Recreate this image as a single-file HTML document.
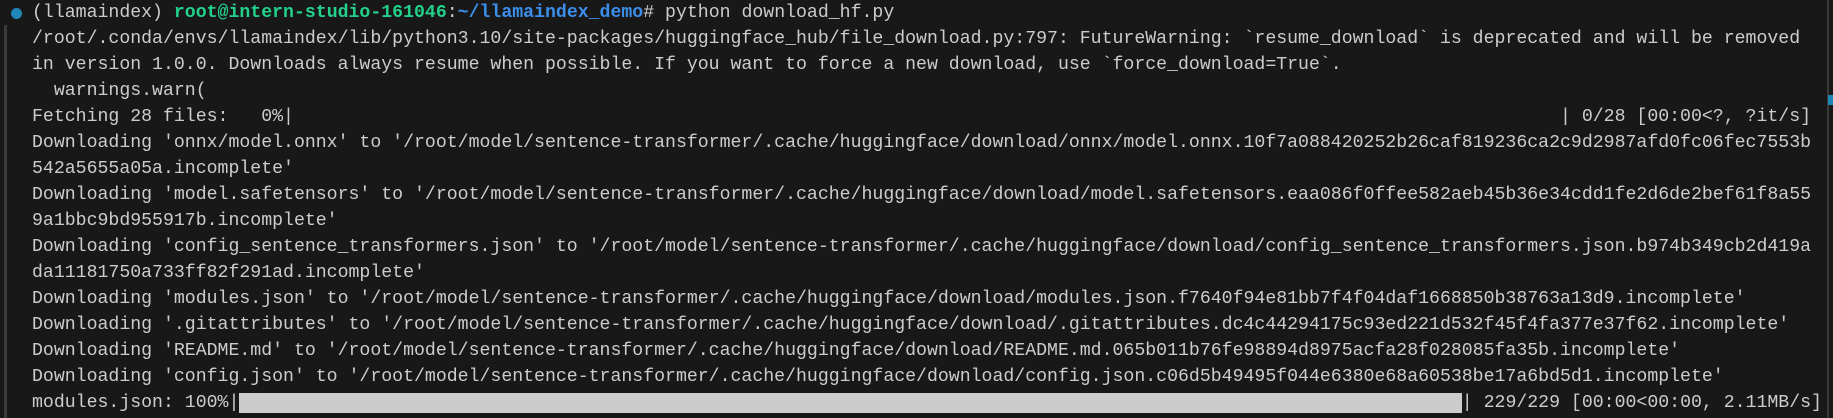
<!DOCTYPE html>
<html><head><meta charset="utf-8"><style>
html,body{margin:0;padding:0;background:#181818;width:1833px;height:418px;overflow:hidden}
.t{position:absolute;left:32px;top:0;font-family:"Liberation Mono",monospace;font-size:18.2px;color:#cccccc}
.l{height:26px;line-height:26px;white-space:pre}
.g{color:#23d18b;font-weight:bold}.b{color:#3b8eea;font-weight:bold}
.bar{background:#cccccc}
</style></head><body>
<div style="position:absolute;left:11px;top:8px;width:11px;height:11px;border-radius:50%;background:#1e87b8"></div>
<div style="position:absolute;left:4px;top:25px;width:3px;height:393px;background:#3a3a3a"></div>
<div style="position:absolute;left:1827px;top:0;width:2px;height:418px;background:#3a3a3a"></div>
<div style="position:absolute;left:1828px;top:95px;width:5px;height:10px;background:#1e87b8"></div>
<div class="t">
<div class="l">(llamaindex) <span class="g">root@intern-studio-161046</span>:<span class="b">~/llamaindex_demo</span># python download_hf.py</div>
<div class="l">/root/.conda/envs/llamaindex/lib/python3.10/site-packages/huggingface_hub/file_download.py:797: FutureWarning: `resume_download` is deprecated and will be removed</div>
<div class="l">in version 1.0.0. Downloads always resume when possible. If you want to force a new download, use `force_download=True`.</div>
<div class="l">  warnings.warn(</div>
<div class="l">Fetching 28 files:   0%|                                                                                                                    | 0/28 [00:00&lt;?, ?it/s]</div>
<div class="l">Downloading 'onnx/model.onnx' to '/root/model/sentence-transformer/.cache/huggingface/download/onnx/model.onnx.10f7a088420252b26caf819236ca2c9d2987afd0fc06fec7553b</div>
<div class="l">542a5655a05a.incomplete'</div>
<div class="l">Downloading 'model.safetensors' to '/root/model/sentence-transformer/.cache/huggingface/download/model.safetensors.eaa086f0ffee582aeb45b36e34cdd1fe2d6de2bef61f8a55</div>
<div class="l">9a1bbc9bd955917b.incomplete'</div>
<div class="l">Downloading 'config_sentence_transformers.json' to '/root/model/sentence-transformer/.cache/huggingface/download/config_sentence_transformers.json.b974b349cb2d419a</div>
<div class="l">da11181750a733ff82f291ad.incomplete'</div>
<div class="l">Downloading 'modules.json' to '/root/model/sentence-transformer/.cache/huggingface/download/modules.json.f7640f94e81bb7f4f04daf1668850b38763a13d9.incomplete'</div>
<div class="l">Downloading '.gitattributes' to '/root/model/sentence-transformer/.cache/huggingface/download/.gitattributes.dc4c44294175c93ed221d532f45f4fa377e37f62.incomplete'</div>
<div class="l">Downloading 'README.md' to '/root/model/sentence-transformer/.cache/huggingface/download/README.md.065b011b76fe98894d8975acfa28f028085fa35b.incomplete'</div>
<div class="l">Downloading 'config.json' to '/root/model/sentence-transformer/.cache/huggingface/download/config.json.c06d5b49495f044e6380e68a60538be17a6bd5d1.incomplete'</div>
<div class="l">modules.json: 100%|<span class="bar">                                                                                                                </span>| 229/229 [00:00&lt;00:00, 2.11MB/s]</div>
</div>
</body></html>
